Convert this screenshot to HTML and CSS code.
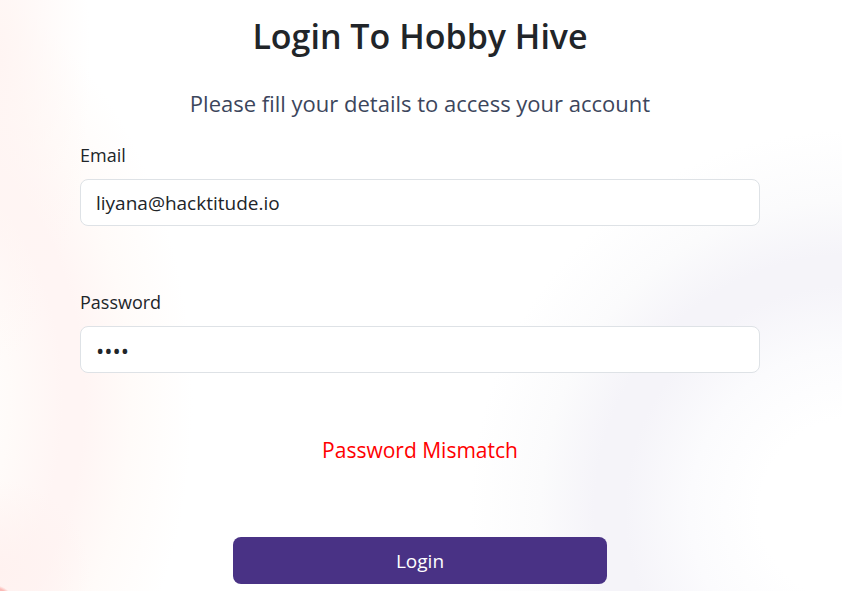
FILE: index.html
```html
<!DOCTYPE html>
<html lang="en">
<head>
<meta charset="utf-8">
<meta name="viewport" content="width=device-width, initial-scale=1">
<title>Login To Hobby Hive</title>
<link rel="stylesheet" href="styles.css">
</head>
<body>
<main class="login">
  <h1 class="login-title">Login To Hobby Hive</h1>
  <p class="login-intro">Please fill your details to access your account</p>
  <form class="login-form">
    <div class="field">
      <label for="email">Email</label>
      <input id="email" type="email" value="liyana@hacktitude.io">
    </div>
    <div class="field">
      <label for="password">Password</label>
      <input id="password" type="password" value="1234">
    </div>
    <p class="login-error" role="alert">Password Mismatch</p>
    <button class="login-submit" type="submit">Login</button>
  </form>
</main>
</body>
</html>
```

FILE: styles.css
```css
* {
  box-sizing: border-box;
}

body {
  margin: 0;
  min-height: 100vh;
  color: #212529;
  font: 18px/28px "Segoe UI", "Open Sans", "Noto Sans", sans-serif;
  background:
    radial-gradient(circle at -6px 606px, #fbb9b5 18px, transparent 21px),
    radial-gradient(circle at 0 570px, #fff2f0 0, rgba(255, 242, 240, 0) 90px),
    radial-gradient(ellipse 90px 300px at 0 60px, #fff5f3 0, rgba(255, 245, 243, 0) 100%),
    radial-gradient(ellipse 340px 480px at -120px 400px, #fff 22%, #fffbf9 38%, #fff5f4 54%, #fff5f4 60%, #fffbf9 74%, rgba(255, 255, 255, 0) 92%),
    radial-gradient(circle at 850px 510px, #fff 90px, #fbfbfd 160px, #f5f4f9 225px, #f5f4f9 255px, #fbfbfc 310px, #fff 380px);
  background-color: #fff;
}

.login {
  padding: 12px 82px 7px 80px;
}

.login-title {
  margin: 0 0 28px;
  font-size: 34px;
  line-height: 49px;
  font-weight: 600;
  text-align: center;
}

.login-intro {
  margin: 0;
  color: #3c465c;
  font-size: 22px;
  line-height: 28px;
  text-align: center;
}

.login-form {
  display: flex;
  flex-direction: column;
  padding-top: 24px;
}

.field {
  display: flex;
  flex-direction: column;
  gap: 10px;
  margin-bottom: 62px;
}

.field input {
  width: 100%;
  height: 47px;
  padding: 8px 15px;
  border: 1px solid #dee2e6;
  border-radius: 8px;
  background: #fff;
  color: #212529;
  font: inherit;
  font-size: 19px;
}

.field input[type="password"] {
  font-size: 22px;
}

.login-error {
  margin: 0 0 72px;
  color: #f00;
  font-size: 21px;
  line-height: 30px;
  text-align: center;
}

.login-submit {
  align-self: center;
  width: 55%;
  height: 47px;
  padding: 0;
  border: 0;
  border-radius: 8px;
  background: #493285;
  color: #fff;
  font: inherit;
  font-size: 19px;
}
```
